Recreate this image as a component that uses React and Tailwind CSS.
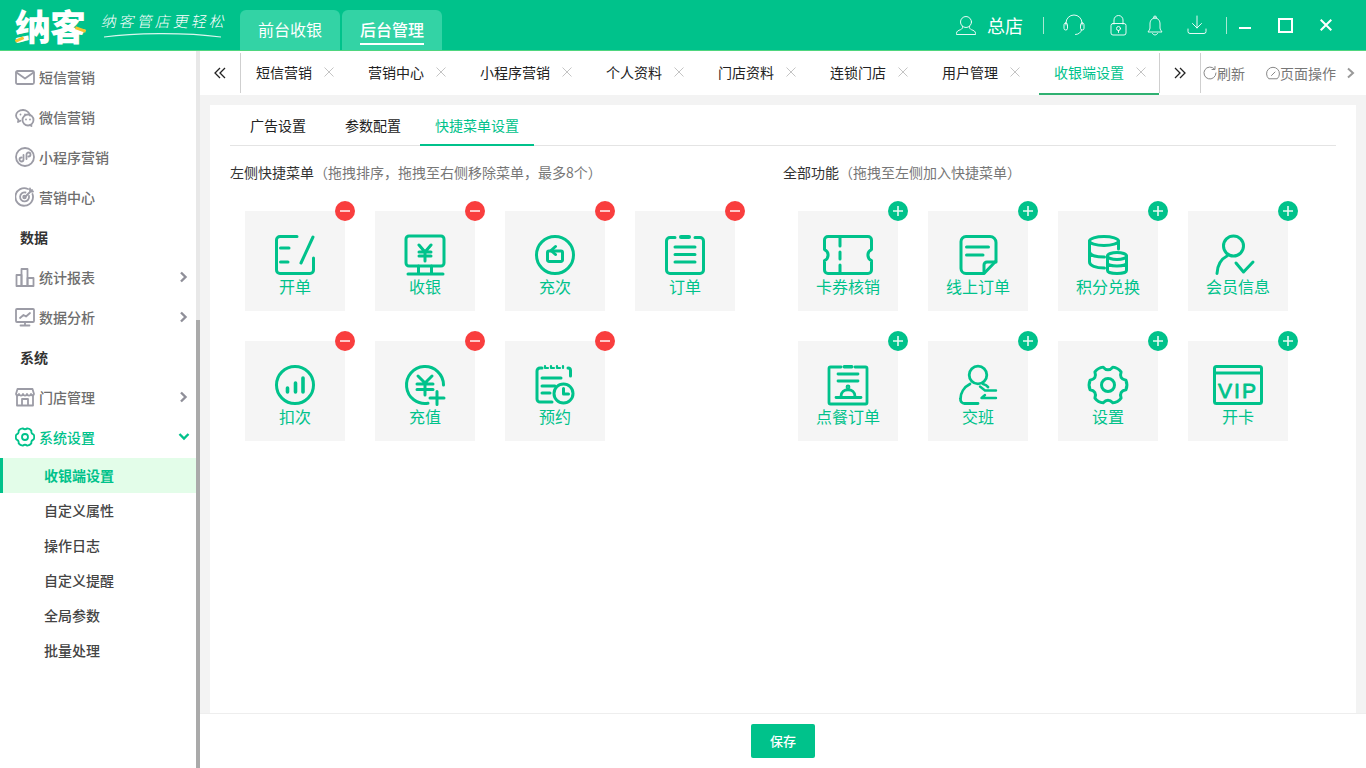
import React from "react";

const G = "#00c28b";

function gearPath(cx, cy, R, r, spread = 17) {
  const pt = (deg, rad) => {
    const a = (deg * Math.PI) / 180;
    return `${(cx + rad * Math.cos(a)).toFixed(2)} ${(cy + rad * Math.sin(a)).toFixed(2)}`;
  };
  let d = `M${pt(-spread, R)}`;
  for (let i = 0; i < 6; i++) {
    const a = i * 60;
    d += ` Q${pt(a, R * 1.08)} ${pt(a + spread, R)}`;
    d += ` Q${pt(a + 30, r)} ${pt(a + 60 - spread, R)}`;
  }
  return d + "Z";
}

function Svg({ w = 40, h = 40, sw = 3, children }) {
  return (
    <svg width={w} height={h} viewBox={`0 0 ${w} ${h}`} fill="none" stroke={G} strokeWidth={sw} strokeLinecap="round" strokeLinejoin="round" className="overflow-visible shrink-0">
      {children}
    </svg>
  );
}

const icons = {
  kaidan: (
    <Svg>
      <path d="M22 1.500H5A3.500 3.500 0 0 0 1.500 5v30A3.500 3.500 0 0 0 5 38.500h30a3.500 3.500 0 0 0 3.500-3.500V23" />
      <path d="M5.500 13H14M5.500 27H13M38 2 26 28" />
    </Svg>
  ),
  shouyin: (
    <Svg>
      <rect x="1" y="1" width="38" height="30" rx="3" />
      <path d="M13.500 31v7M26.500 31v7M3 39h35" />
      <path d="M14 10l6 7 6-7M14 17h12M14 21h12M20 17v9" />
    </Svg>
  ),
  chongci: (
    <Svg>
      <circle cx="20" cy="20" r="18.500" />
      <path d="M15.500 16H14a1.500 1.500 0 0 0-1.500 1.500V25a1.500 1.500 0 0 0 1.500 1.500h12a1.500 1.500 0 0 0 1.500-1.500v-7.500A1.500 1.500 0 0 0 26 16h-9" />
      <path d="M20.500 11.500 16 15.500l4.500 4" />
    </Svg>
  ),
  dingdan: (
    <Svg>
      <path d="M10 2.500H5A3.500 3.500 0 0 0 1.500 6v29A3.500 3.500 0 0 0 5 38.500h30a3.500 3.500 0 0 0 3.500-3.500V6A3.500 3.500 0 0 0 35 2.500h-5" />
      <rect x="14" y="0" width="12" height="4" rx="2" fill={G} stroke="none" />
      <path d="M10 12h20M10 19.500h20M10 27h20" />
    </Svg>
  ),
  kouci: (
    <Svg>
      <circle cx="20" cy="20" r="18.500" />
      <path d="M12.500 23v4M20.500 18v9M28 13v14" strokeWidth="3.600" />
    </Svg>
  ),
  chongzhi: (
    <Svg>
      <path d="M38.500 20A18.500 18.500 0 1 0 23 38.300" />
      <path d="M13 11l7 7 7-7M12 19h16M12 24.500h16M20 18v12" />
      <path d="M32 26.500v13M25 33h14" />
    </Svg>
  ),
  yuyue: (
    <Svg>
      <path d="M17 37H5a3 3 0 0 1-3-3V6a3 3 0 0 1 3-3h2M33 3h0a2.500 2.500 0 0 1 2.500 2.500V11" />
      <path d="M11 3h2M17 3h2M23 3h2M10 1v2M16 1v2M22 1v2M28 1v2" strokeWidth="2.200" />
      <path d="M7 13h19M7 21h13M7 28h8" />
      <circle cx="28.500" cy="28.500" r="9.500" />
      <path d="M28.500 23.500v5.500h5" />
    </Svg>
  ),
  kaquan: (
    <Svg w={50}>
      <path d="M5 1.500h40A3.500 3.500 0 0 1 48.500 5v9.500A6 6 0 0 0 48.500 25.500V35a3.500 3.500 0 0 1-3.500 3.500H5A3.500 3.500 0 0 1 1.500 35v-9.500A6 6 0 0 0 1.500 14.500V5A3.500 3.500 0 0 1 5 1.500Z" />
      <path d="M17 2v9M17 17v7M17 30v8" />
    </Svg>
  ),
  xianshang: (
    <Svg>
      <path d="M8 1.500h24A6 6 0 0 1 38 7.500V26L26 38.500H8A5 5 0 0 1 3 33.500V6.500A5 5 0 0 1 8 1.500Z" />
      <path d="M26 38v-8a3 3 0 0 1 3-3h9" />
      <path d="M8.500 12h22M8.500 20H25" />
    </Svg>
  ),
  jifen: (
    <Svg>
      <ellipse cx="16" cy="6" rx="14.500" ry="4.500" />
      <path d="M1.500 6v21c0 3.500 6 6 15 6M30.500 6v8M1.500 16.500c0 3.500 6 5.500 15 5.500" />
      <ellipse cx="29" cy="21" rx="9.500" ry="3.500" />
      <path d="M19.500 21v14.500c0 4 19 4 19 0V21M19.500 28c0 4 19 4 19 0" />
    </Svg>
  ),
  huiyuan: (
    <Svg>
      <circle cx="15.500" cy="11" r="10" />
      <path d="M-1 38.500C-0.500 30 3 24 9 21" />
      <path d="M18 28l7.500 9L35 27" />
    </Svg>
  ),
  diancan: (
    <Svg sw={2.800}>
      <path d="M13 2H2.500a1.500 1.500 0 0 0-1.500 1.500V37.500A1.500 1.500 0 0 0 2.500 39h35a1.500 1.500 0 0 0 1.500-1.500V3.500A1.500 1.500 0 0 0 37.500 2H27" />
      <rect x="14.500" y="0" width="11" height="3.500" rx="1.700" fill={G} stroke="none" />
      <path d="M10 9h20M10 16h20" />
      <path d="M13 31.500c0-9 14-9 14 0M8 32.500h25" />
      <circle cx="20" cy="22" r="1" />
    </Svg>
  ),
  jiaoban: (
    <Svg sw={2.800}>
      <circle cx="20" cy="10" r="8.800" />
      <path d="M12 19C6 22 2.500 28 2.500 34a4 4 0 0 0 4 4.500H20" />
      <path d="M25 19c2 .5 4 1.500 5 3" />
      <path d="M22 21.500l5 4h11M38 33H23.500l3.500-3" strokeWidth="2.400" />
    </Svg>
  ),
  shezhi: (
    <Svg>
      <path d={gearPath(20, 20, 18.500, 12.500, 15)} />
      <circle cx="20" cy="20" r="6.500" />
    </Svg>
  ),
  vip: (
    <Svg w={50}>
      <rect x="1.500" y="1.500" width="47" height="37" rx="2" />
      <path d="M1.500 8h47" />
      <text x="25" y="32.500" textAnchor="middle" fill={G} stroke={G} strokeWidth="0.800" fontSize="21" letterSpacing="2" fontFamily="'Liberation Sans', sans-serif" fontWeight="400">VIP</text>
    </Svg>
  ),
};

function Tile({ label, icon, kind }) {
  return (
    <div className="relative w-[100px] h-[100px] bg-[#f5f5f5] flex flex-col items-center pt-[24px]">
      <div className="h-[40px] flex items-center justify-center">{icons[icon]}</div>
      <span className="text-[16px] leading-[22px] text-[#00c28b]">{label}</span>
      <span className={`absolute -top-[10px] -right-[10px] w-[20px] h-[20px] rounded-full flex items-center justify-center ${kind === "minus" ? "bg-[#f93e3e]" : "bg-[#00c28b]"}`}>
        {kind === "minus" ? (
          <span className="block w-[10px] h-[2px] bg-[#ffc9c9]" />
        ) : (
          <svg width="12" height="12" viewBox="0 0 12 12" stroke="#e8fbf4" strokeWidth="1.600"><path d="M6 1v10M1 6h10" /></svg>
        )}
      </span>
    </div>
  );
}

function Side({ children, w = 20 }) {
  return (
    <svg width={w} height="20" viewBox="0 0 20 20" fill="none" stroke="#9c9ca6" strokeWidth="1.800" strokeLinecap="round" strokeLinejoin="round" className="shrink-0">
      {children}
    </svg>
  );
}

const Chevron = ({ open }) =>
  open ? (
    <svg width="12" height="12" viewBox="0 0 12 12" fill="none" stroke={G} strokeWidth="2.400"><path d="M1.500 3 6 7.500 10.500 3" /></svg>
  ) : (
    <svg width="12" height="12" viewBox="0 0 12 12" fill="none" stroke="#8f8f99" strokeWidth="2.400"><path d="M3 1.500 7.500 6 3 10.500" /></svg>
  );

function NavItem({ icon, label, chevron, active }) {
  return (
    <div className="h-[40px] flex items-center pl-[15px]">
      {icon}
      <span className={`ml-[4px] text-[14px] font-medium ${active ? "text-[#00c28b]" : "text-[#6e6e6e]"}`}>{label}</span>
      {chevron && (
        <span className="ml-auto mr-[6px] flex">
          <Chevron open={active} />
        </span>
      )}
    </div>
  );
}

const X = () => (
  <svg width="10" height="10" viewBox="0 0 10 10" stroke="#c4c4c4" strokeWidth="1" className="shrink-0"><path d="M.5.5l9 9M9.500.5l-9 9" /></svg>
);

function Tab({ label, active }) {
  return (
    <div className={`h-[44px] flex items-center shrink-0 border-b-2 ${active ? "border-[#2fb071] w-[120px] ml-px pl-[15px]" : "border-transparent pl-[16px] pr-[18px]"}`}>
      <span className={`text-[14px] ${active ? "text-[#00c28b]" : "text-[#222]"}`}>{label}</span>
      <span className="ml-[12px] flex"><X /></span>
    </div>
  );
}

const H = ({ children, w = 22, h = 22 }) => (
  <svg width={w} height={h} viewBox={`0 0 ${w} ${h}`} fill="none" stroke="#fff" strokeOpacity="0.9" strokeWidth="1" strokeLinecap="round" strokeLinejoin="round" className="shrink-0">
    {children}
  </svg>
);

const DoubleChevron = ({ dir }) => (
  <svg width="12" height="12" viewBox="0 0 12 12" fill="none" stroke="#222" strokeWidth="1.300">
    {dir === "left" ? <path d="M6 1 1 6l5 5M11 1 6 6l5 5" /> : <path d="M1 1l5 5-5 5M6 1l5 5-5 5" />}
  </svg>
);

export default function App() {
  const font = "font-['Noto_Sans_CJK_SC','Noto_Sans',sans-serif]";
  return (
    <div className={`w-[1366px] h-[768px] overflow-hidden flex flex-col bg-white ${font}`}>
      {/* header */}
      <header className="h-[51px] shrink-0 bg-[#00c28b] border-b border-[#4fd67f] flex">
        <div className="w-[240px] shrink-0 flex items-center pl-[15px]">
          <div className="relative w-[72px] h-[36px] flex items-center">
            <span className="text-[36px] leading-[36px] font-black text-white tracking-[-1px]">纳客</span>
            <span className="absolute left-0 top-[31px] w-[9px] h-[3px] bg-[#f4c430] rotate-[-25deg]" />
            <span className="absolute left-[60px] top-[21px] w-[11px] h-[3px] bg-[#f4c430] rotate-[20deg]" />
          </div>
          <div className="relative ml-[15px] w-[126px] h-[30px]">
            <span className="block text-[15px] leading-[22px] text-white tracking-[3px] font-light whitespace-nowrap skew-x-[-12deg]">纳客管店更轻松</span>
            <svg width="120" height="6" viewBox="0 0 120 6" fill="none" stroke="#fff" strokeOpacity="0.85" className="absolute left-[1px] top-[22px]"><path d="M1 5C30 1 80 0 118 5" strokeWidth="1.100" /></svg>
          </div>
        </div>
        <div className="flex items-end gap-[2px]">
          <div className="w-[100px] h-[40px] rounded-t-[6px] bg-[#33d3a5] flex justify-center pt-[7px]">
            <span className="text-[16px] leading-[24px] text-white">前台收银</span>
          </div>
          <div className="w-[100px] h-[40px] rounded-t-[6px] bg-[#33d3a5] flex justify-center pt-[7px]">
            <span className="h-[28px] text-[16px] leading-[24px] text-white font-medium border-b-2 border-white">后台管理</span>
          </div>
        </div>
        <div className="ml-auto flex items-center pr-[34px]">
          <H w={20} h={20}>
            <circle cx="10" cy="7" r="5.500" />
            <path d="M6.500 11.500c.5 1.500-.5 2.500-2 3.200C2.500 15.500.5 16 .5 18.500v1h19v-1c0-2.500-2-3-4-3.800-1.500-.7-2.500-1.700-2-3.200" />
          </H>
          <span className="ml-[11px] text-[18px] leading-[26px] text-white">总店</span>
          <span className="ml-[20px] w-px h-[17px] bg-[#a8e8d2]" />
          <span className="ml-[19px] flex">
            <H>
              <path d="M3 11V9a8 8 0 0 1 16 0v2" />
              <rect x="1" y="9" width="3.500" height="7" rx="1.700" />
              <rect x="17.500" y="9" width="3.500" height="7" rx="1.700" />
              <path d="M18.500 16c-.5 2.500-3 4.500-6 4.500" />
            </H>
          </span>
          <span className="ml-[25px] flex">
            <H w={17} h={21}>
              <path d="M4 9V5a4.500 4.500 0 0 1 9 0v4" />
              <rect x="1" y="8.500" width="15" height="11.500" rx="2" />
              <circle cx="8.500" cy="13.500" r="2" />
              <path d="M8.500 15.500v2" />
            </H>
          </span>
          <span className="ml-[20px] flex">
            <H w={16} h={21}>
              <path d="M8 3C4.500 3 3 6 3 9v4c0 1.500-1.500 3-2 4h14c-.5-1-2-2.500-2-4V9c0-3-1.500-6-5-6Z" />
              <path d="M6.500 2.500a1.500 1.500 0 0 1 3 0M5.500 18.500c1 2 4 2 5 0" />
            </H>
          </span>
          <span className="ml-[24px] flex">
            <H w={20} h={20}>
              <path d="M10 1v12M5.500 8.500 10 13l4.500-4.500M1 14v2.500a2 2 0 0 0 2 2h14a2 2 0 0 0 2-2V14" />
            </H>
          </span>
          <span className="ml-[19px] w-px h-[17px] bg-[#a8e8d2]" />
          <span className="ml-[12px] mt-[6px] w-[12px] h-[2px] bg-white" />
          <span className="ml-[27px] w-[15px] h-[15px] border-2 border-white" />
          <span className="ml-[27px] flex">
            <svg width="12" height="12" viewBox="0 0 12 12" stroke="#fff" strokeWidth="2"><path d="M.7.7l10.600 10.600M11.300.7.7 11.300" /></svg>
          </span>
        </div>
      </header>

      <div className="flex-1 flex min-h-0">
        {/* sidebar */}
        <aside className="w-[196px] shrink-0 pt-[6px] bg-white">
          <NavItem label="短信营销" icon={<Side><rect x="1" y="4" width="18" height="13" rx="1.500" /><path d="M1.500 5.500 10 11.500l8.500-6" /></Side>} />
          <NavItem label="微信营销" icon={<Side><path d="M8 3C4 3 1 5.500 1 8.500c0 1.800 1 3.200 2.500 4.200L3 15l2.500-1.200" /><path d="M15 8.500C14.500 5.500 11.500 3 8 3" /><circle cx="13" cy="13" r="5.500" /><path d="M15 18l1.500 1" /><path d="M5.500 7.500h0M10 7.500h0M11 12.500h0M15 12.500h0" strokeWidth="1.800" /></Side>} />
          <NavItem label="小程序营销" icon={<Side><circle cx="10" cy="10" r="9" /><path d="M8.500 8v4.500a2 2 0 1 1-2-2" /><path d="M11.500 12V7.500a2 2 0 1 1 2 2" /></Side>} />
          <NavItem label="营销中心" icon={<Side><path d="M17.500 7A8.800 8.800 0 1 1 13 2" /><path d="M14 9a4.500 4.500 0 1 1-3.500-3.500" /><circle cx="9.500" cy="10" r="1.300" /><path d="M10 10l7-7M15 1.500v3h3" /></Side>} />
          <div className="h-[40px] flex items-center pl-[20px] text-[14px] font-bold text-[#333]">数据</div>
          <NavItem label="统计报表" chevron icon={<Side><rect x="1.500" y="8" width="5" height="11" /><rect x="6.500" y="2" width="6" height="17" /><rect x="12.500" y="11" width="6" height="8" /></Side>} />
          <NavItem label="数据分析" chevron icon={<Side><rect x="1" y="2" width="18" height="13" rx="1" /><path d="M5 11l3.500-3 2.500 1.500L15 6M10 15v3M5.500 18.500h9" /></Side>} />
          <div className="h-[40px] flex items-center pl-[20px] text-[14px] font-bold text-[#333]">系统</div>
          <NavItem label="门店管理" chevron icon={<Side><path d="M2 8v10.500h16V8" /><path d="M2.500 2h15L19 7c-.5 2-3 2-3 0 0 2-4 2-4 0 0 2-4 2-4 0 0 2-4 2-4 0 0 2-2.500 2-3 0Z" /><path d="M7 18v-6h6v6" /></Side>} />
          <NavItem
            active
            label="系统设置"
            chevron
            icon={
              <svg width="20" height="20" viewBox="0 0 20 20" fill="none" stroke={G} strokeWidth="1.800" strokeLinejoin="round" className="shrink-0">
                <path d={gearPath(10, 10, 9, 6.800, 15)} />
                <circle cx="10" cy="10" r="3" />
              </svg>
            }
          />
          <div className="h-[35px] mt-px flex items-center pl-[41px] border-l-[3px] border-[#00c28b] bg-[#e3fde9] text-[14px] font-bold text-[#00c28b]">收银端设置</div>
          {["自定义属性", "操作日志", "自定义提醒", "全局参数", "批量处理"].map((t) => (
            <div key={t} className="h-[35px] flex items-center pl-[44px] text-[14px] font-medium text-[#444]">{t}</div>
          ))}
        </aside>
        {/* scrollbar */}
        <div className="w-[4px] shrink-0 bg-[#e8e8e8] flex flex-col">
          <div className="h-[269px] shrink-0" />
          <div className="flex-1 bg-[#aaaaaa]" />
        </div>

        {/* main */}
        <main className="flex-1 min-w-0 flex flex-col bg-[#f3f3f3]">
          <div className="h-[44px] shrink-0 bg-white flex">
            <div className="w-[40px] flex items-center justify-center"><DoubleChevron dir="left" /></div>
            <div className="w-px h-[40px] mt-[2px] bg-[#cfcfcf]" />
            <div className="flex -ml-px">
              <Tab label="短信营销" />
              <Tab label="营销中心" />
              <Tab label="小程序营销" />
              <Tab label="个人资料" />
              <Tab label="门店资料" />
              <Tab label="连锁门店" />
              <Tab label="用户管理" />
              <Tab label="收银端设置" active />
            </div>
            <div className="w-px h-[40px] mt-[2px] bg-[#cfcfcf]" />
            <div className="w-[40px] flex items-center justify-center"><DoubleChevron dir="right" /></div>
            <div className="w-px h-[40px] mt-[2px] bg-[#cfcfcf]" />
            <div className="flex items-center pl-[2px] text-[14px] text-[#777]">
              <svg width="14" height="14" viewBox="0 0 14 14" fill="none" stroke="#888" strokeWidth="1" strokeLinecap="round"><path d="M11.500 3A6 6 0 1 0 13 7" /><path d="M12 .5V3.500H9" /></svg>
              <span>刷新</span>
              <span className="ml-[21px] flex">
                <svg width="14" height="14" viewBox="0 0 14 14" fill="none" stroke="#888" strokeWidth="1" strokeLinecap="round"><path d="M2.500 12.500A6.500 6.500 0 1 1 11.500 12.500Z" /><path d="M5.500 9.500 9 6" /></svg>
              </span>
              <span>页面操作</span>
              <span className="ml-[10px] flex"><svg width="10" height="12" viewBox="0 0 10 12" fill="none" stroke="#999" strokeWidth="2"><path d="M2 1.500 7 6l-5 4.500" /></svg></span>
            </div>
          </div>

          <div className="flex-1 min-h-0 pt-[10px] px-[10px]">
            <div className="h-full bg-white px-[20px]">
              <div className="h-[41px] border-b border-[#e4e4e4] flex items-stretch text-[14px]">
                <div className="pl-[20px] pr-[19px] flex items-center text-[#222] pt-[1px]">广告设置</div>
                <div className="pl-[20px] pr-[19px] flex items-center text-[#222] pt-[1px]">参数配置</div>
                <div className="h-[41px] px-[15px] flex items-center text-[#00c28b] border-b-2 border-[#00c28b] pt-[1px]">快捷菜单设置</div>
              </div>
              <div className="flex pt-[16px]">
                <section className="w-[553px] shrink-0">
                  <div className="text-[14px] leading-[20px] text-[#333] whitespace-nowrap">左侧快捷菜单<span className="text-[#777]">（拖拽排序，拖拽至右侧移除菜单，最多8个）</span></div>
                  <div className="mt-[29px] pl-[15px] grid grid-cols-[repeat(4,100px)] gap-[30px]">
                    <Tile kind="minus" label="开单" icon="kaidan" />
                    <Tile kind="minus" label="收银" icon="shouyin" />
                    <Tile kind="minus" label="充次" icon="chongci" />
                    <Tile kind="minus" label="订单" icon="dingdan" />
                    <Tile kind="minus" label="扣次" icon="kouci" />
                    <Tile kind="minus" label="充值" icon="chongzhi" />
                    <Tile kind="minus" label="预约" icon="yuyue" />
                  </div>
                </section>
                <section className="flex-1">
                  <div className="text-[14px] leading-[20px] text-[#333] whitespace-nowrap">全部功能<span className="text-[#777]">（拖拽至左侧加入快捷菜单）</span></div>
                  <div className="mt-[29px] pl-[15px] grid grid-cols-[repeat(4,100px)] gap-[30px]">
                    <Tile kind="plus" label="卡券核销" icon="kaquan" />
                    <Tile kind="plus" label="线上订单" icon="xianshang" />
                    <Tile kind="plus" label="积分兑换" icon="jifen" />
                    <Tile kind="plus" label="会员信息" icon="huiyuan" />
                    <Tile kind="plus" label="点餐订单" icon="diancan" />
                    <Tile kind="plus" label="交班" icon="jiaoban" />
                    <Tile kind="plus" label="设置" icon="shezhi" />
                    <Tile kind="plus" label="开卡" icon="vip" />
                  </div>
                </section>
              </div>
            </div>
          </div>

          <div className="h-[55px] shrink-0 bg-white border-t border-[#eeeeee] flex justify-center items-start pt-[10px]">
            <button className="w-[64px] h-[34px] bg-[#00c28b] rounded-[2px] text-white text-[13px] font-medium">保存</button>
          </div>
        </main>
      </div>
    </div>
  );
}
